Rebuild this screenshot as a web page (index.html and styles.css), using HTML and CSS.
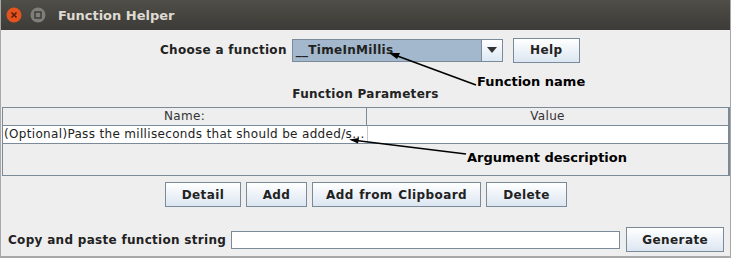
FILE: index.html
```html
<!DOCTYPE html>
<html lang="en">
<head>
  <meta charset="UTF-8">
  <title>Function Helper</title>
  <link rel="stylesheet" href="styles.css">
</head>
<body>
  <div class="window">
    <div class="titlebar">
      <svg class="title-buttons" width="50" height="30" viewBox="0 0 50 30">
        <circle cx="14" cy="15" r="7.5" fill="#e4521f"/>
        <path d="M11.5 12.5 L16.5 17.5 M16.5 12.5 L11.5 17.5" stroke="#5a1d08" stroke-width="1.6"/>
        <circle cx="38" cy="15" r="7.5" fill="#7f7e79"/>
        <rect x="35" y="12" width="6" height="6" fill="none" stroke="#3b3a36" stroke-width="1.4"/>
      </svg>
      <span class="title">Function Helper</span>
    </div>

    <div class="content">
      <div class="choose-row">
        <label class="field-label">Choose a function</label>
        <div class="combo">
          <span class="combo-value">__TimeInMillis</span>
          <span class="combo-arrow">
            <svg width="10" height="6" viewBox="0 0 10 6"><path d="M0 0 L10 0 L5 6 Z" fill="#333"/></svg>
          </span>
        </div>
        <button class="btn help-btn">Help</button>
      </div>

      <div class="section-title">Function Parameters</div>

      <div class="table">
        <div class="table-head">
          <div class="cell name-col">Name:</div>
          <div class="cell value-col">Value</div>
        </div>
        <div class="table-row">
          <div class="cell name-col">(Optional)Pass the milliseconds that should be added/s...</div>
          <div class="cell value-col"></div>
        </div>
      </div>

      <div class="button-row">
        <button class="btn detail-btn">Detail</button>
        <button class="btn add-btn">Add</button>
        <button class="btn clipboard-btn">Add from Clipboard</button>
        <button class="btn delete-btn">Delete</button>
      </div>

      <div class="string-row">
        <label class="field-label">Copy and paste function string</label>
        <input class="string-input" type="text">
        <button class="btn generate-btn">Generate</button>
      </div>

      <!-- annotations drawn over the dialog -->
      <svg class="arrows" width="731" height="228" viewBox="0 30 731 228">
        <path d="M476 85 L392 54" stroke="#000" stroke-width="1.6"/>
        <path d="M389 53 L400 53 L397 59 Z" fill="#000"/>
        <path d="M466 154 L352 140" stroke="#000" stroke-width="1.6"/>
        <path d="M349 139.5 L359 138 L358 143.5 Z" fill="#000"/>
      </svg>
      <span class="note note-function">Function name</span>
      <span class="note note-argument">Argument description</span>
    </div>
  </div>
</body>
</html>
```

FILE: styles.css
```css
body {
  margin: 0;
  padding: 0;
  background-color: #eeeeee;
  font-family: "DejaVu Sans", sans-serif;
  color: #333;
}

.window {
  width: 731px;
  height: 258px;
  box-sizing: border-box;
  border-left: 1px solid #a8a8a8;
  border-right: 1px solid #a8a8a8;
  border-bottom: 2px solid #a8a8a8;
  overflow: hidden;
}

.titlebar {
  height: 30px;
  display: flex;
  align-items: center;
  background: linear-gradient(#504e48, #3c3b37);
  margin: 0 -1px;
}

.title-buttons {
  display: block;
}

.title {
  margin-left: 8px;
  font-weight: bold;
  font-size: 13px;
  color: #dfdbd2;
}

.content {
  position: relative;
  height: 226px;
}

.field-label {
  font-weight: bold;
  font-size: 12px;
  letter-spacing: 0.3px;
  color: #222;
}

.choose-row {
  display: flex;
  align-items: center;
  padding-top: 8px;
  padding-left: 159px;
  height: 24px;
}

.combo {
  display: flex;
  width: 211px;
  height: 23px;
  box-sizing: border-box;
  margin-left: 5px;
  border: 1px solid #7a8a99;
  background-color: #a3b8cc;
}

.combo-value {
  flex: 1;
  padding-left: 3px;
  font-weight: bold;
  font-size: 12px;
  letter-spacing: 0.3px;
  line-height: 21px;
  color: #222;
}

.combo-arrow {
  width: 20px;
  display: flex;
  align-items: center;
  justify-content: center;
  border-left: 1px solid #7a8a99;
  background: linear-gradient(#ffffff, #dde8f3);
}

.btn {
  height: 25px;
  box-sizing: border-box;
  padding: 0;
  border: 1px solid #7a8a99;
  background: linear-gradient(#ffffff, #dce6f1);
  font-family: "DejaVu Sans", sans-serif;
  font-weight: bold;
  font-size: 12px;
  letter-spacing: 0.4px;
  color: #222;
  text-align: center;
}

.help-btn {
  margin-left: 10px;
  width: 67px;
}

.detail-btn {
  width: 76px;
}

.add-btn {
  width: 61px;
}

.clipboard-btn {
  width: 169px;
  word-spacing: 1px;
}

.delete-btn {
  width: 81px;
}

.generate-btn {
  margin-left: 6px;
  width: 98px;
}

.section-title {
  margin-top: 25px;
  text-align: center;
  font-weight: bold;
  font-size: 12px;
  letter-spacing: 0.3px;
  line-height: 15px;
  color: #222;
}

.table {
  margin: 5px 0 0 1px;
  height: 69px;
  border: 1px solid #7a8a99;
  border-right-width: 2px;
  box-sizing: border-box;
}

.table-head,
.table-row {
  display: flex;
  height: 17px;
  font-size: 12px;
  letter-spacing: 0.33px;
  line-height: 16px;
}

.table-head {
  text-align: center;
  border-bottom: 1px solid #7a8a99;
  color: #333;
}

.table-row {
  background-color: #fff;
  border-bottom: 1px solid #7a8a99;
  color: #222;
}

.cell {
  white-space: nowrap;
  overflow: hidden;
}

.name-col {
  width: 363px;
  border-right: 1px solid #7a8a99;
}

.table-row .name-col {
  padding-left: 1px;
  border-right-color: #c8c8c8;
}

.value-col {
  flex: 1;
}

.button-row {
  display: flex;
  gap: 5px;
  margin-top: 6px;
  padding-left: 164px;
}

.string-row {
  display: flex;
  align-items: center;
  margin-top: 20px;
  padding-left: 7px;
}

.string-input {
  margin-left: 5px;
  width: 389px;
  height: 18px;
  box-sizing: border-box;
  border: 1px solid #7a8a99;
  background: #fff;
  padding: 0;
}

.arrows {
  position: absolute;
  top: 0;
  left: -1px;
  pointer-events: none;
}

.note {
  position: absolute;
  font-weight: bold;
  font-size: 13px;
  color: #000;
}

.note-function {
  left: 476px;
  top: 44px;
}

.note-argument {
  left: 466px;
  top: 120px;
}
```
